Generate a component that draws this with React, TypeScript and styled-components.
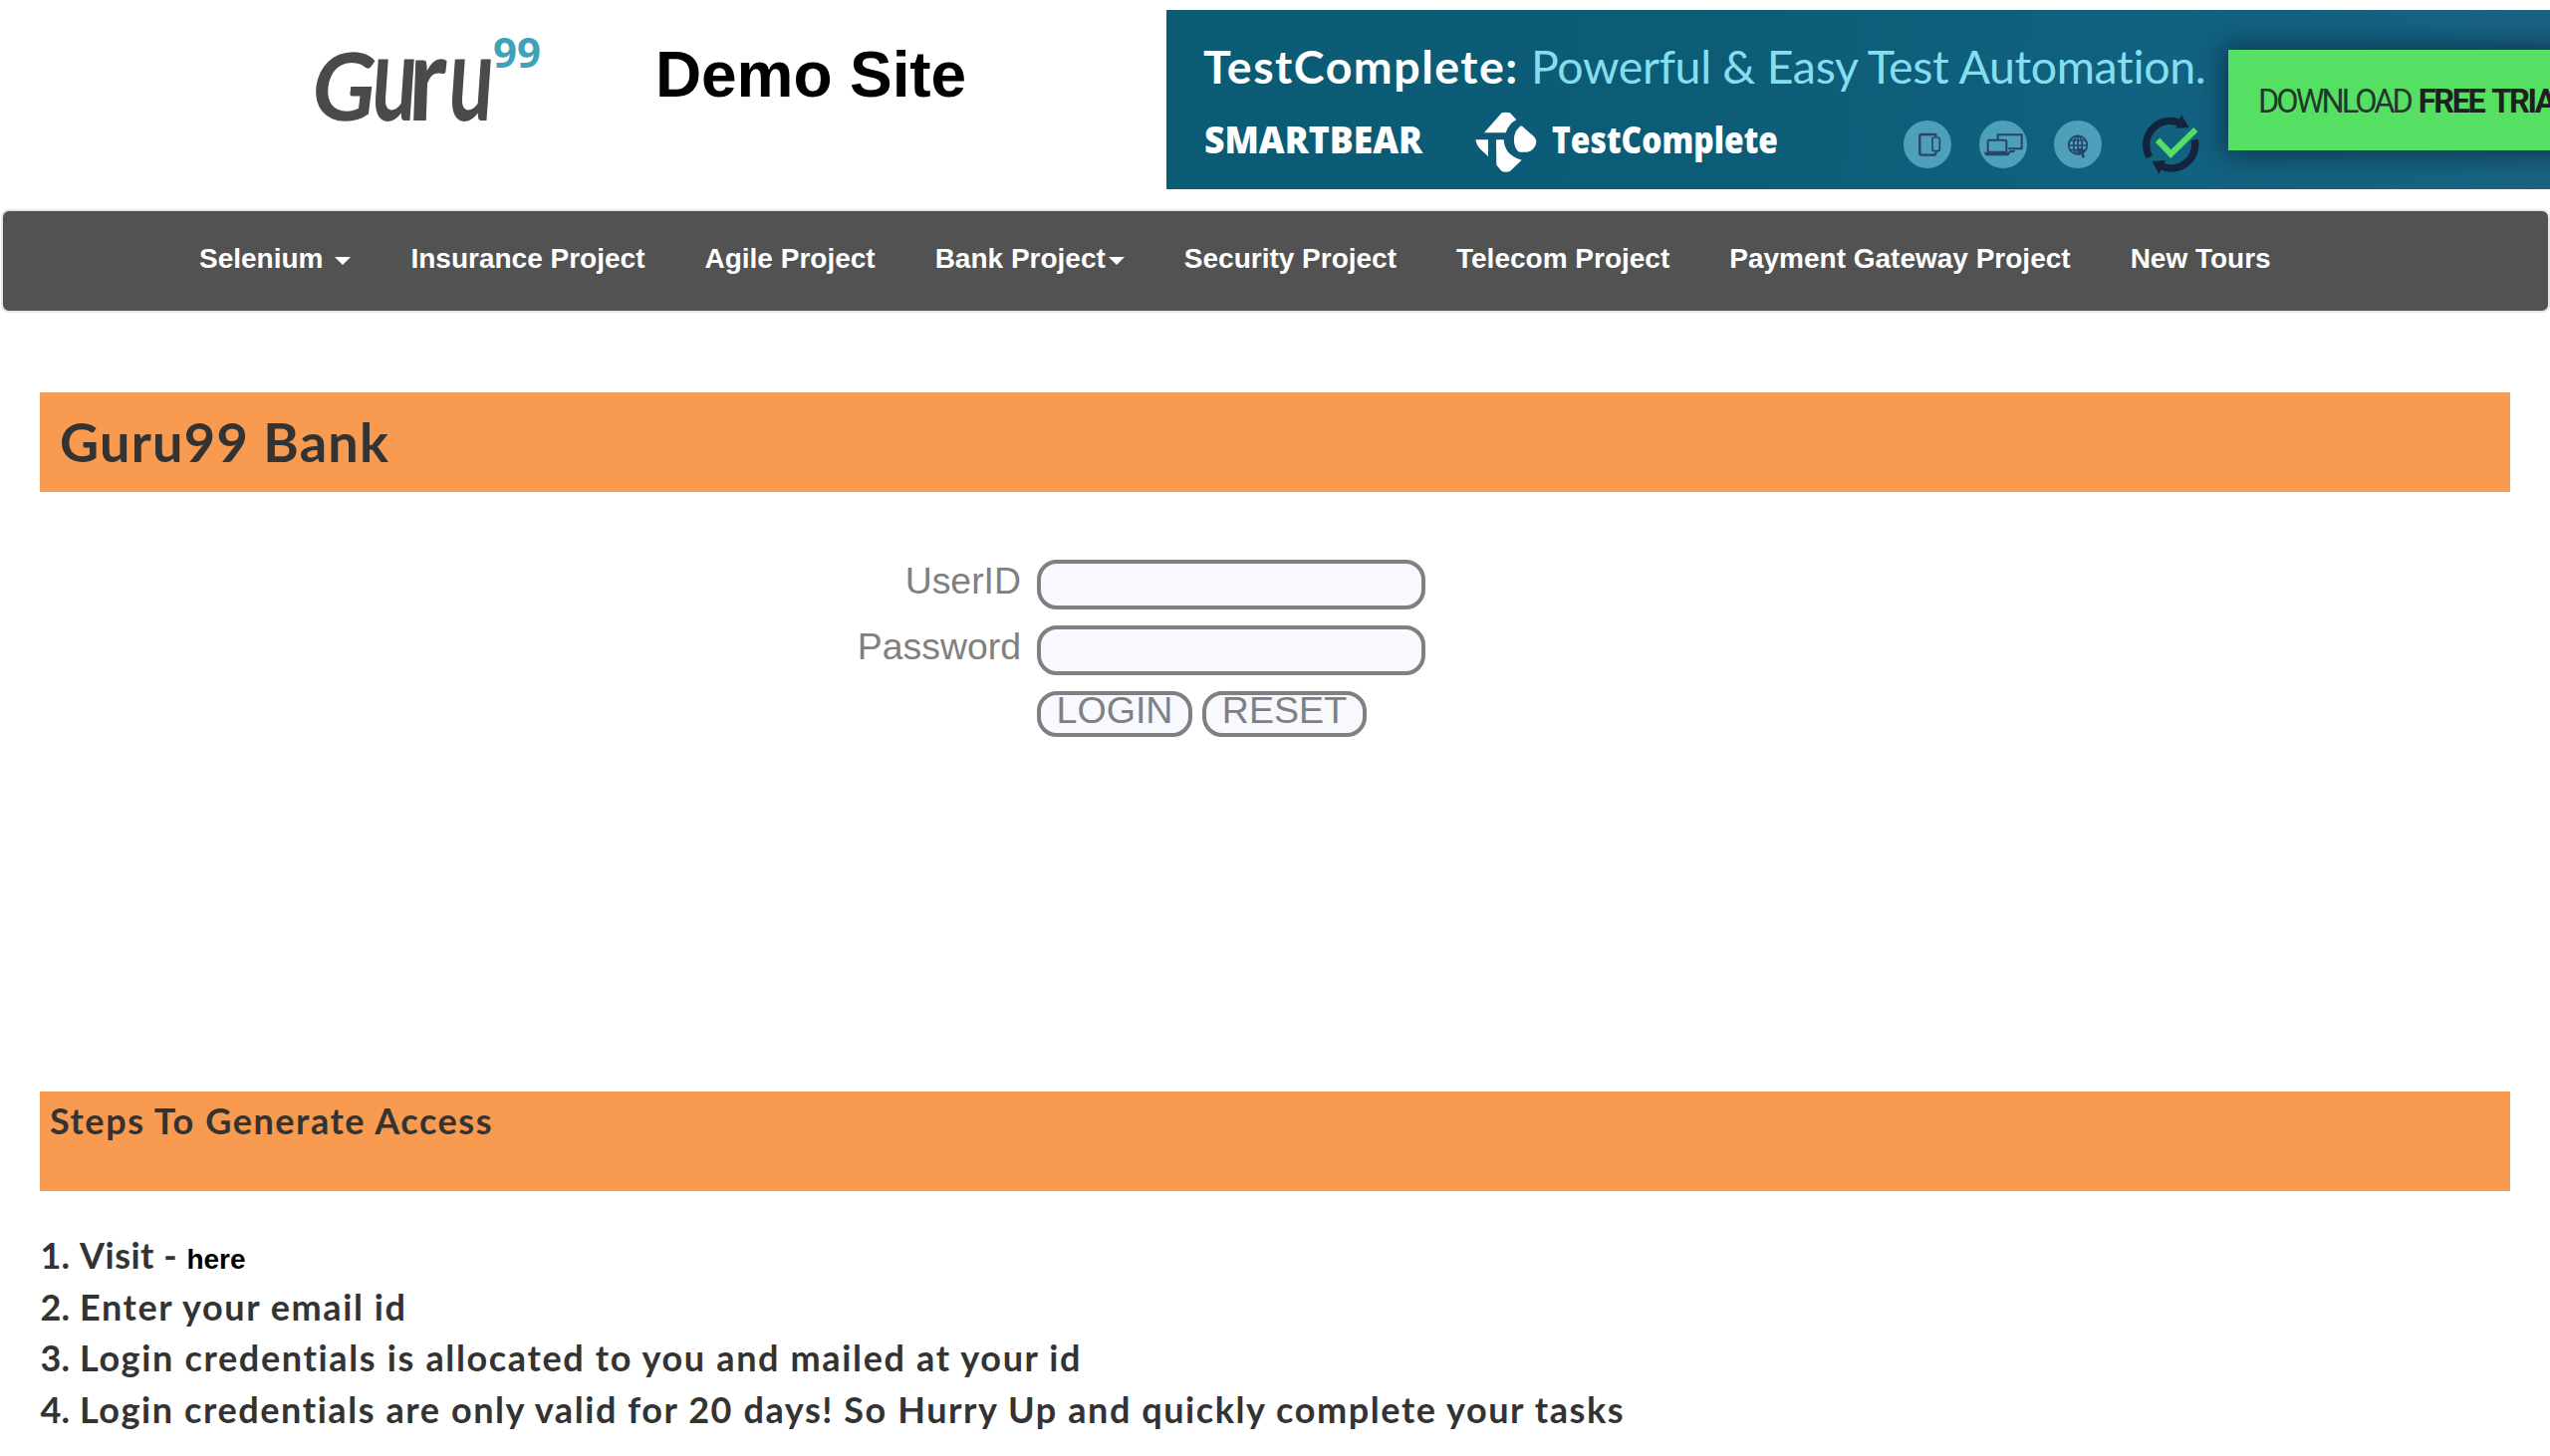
import React from "react";
import styled, { createGlobalStyle } from "styled-components";

const GlobalStyle = createGlobalStyle`
  * { box-sizing: border-box; }
  body { margin: 0; background: #fff; overflow: hidden; }
`;

const helvetica = `"Liberation Sans", Arial, sans-serif`;
const rounded = `Lato, "Open Sans", sans-serif`;

const Page = styled.div`
  width: 100%;
  height: 1462px;
  overflow: hidden;
  color: #333;
  font-family: ${rounded};
`;

const Header = styled.header`
  display: flex;
  align-items: flex-start;
  height: 210px;
  padding-left: 300px;
`;

const Logo = styled.svg`
  display: block;
  flex: none;
  overflow: visible;
  width: 260px;
  height: 110px;
  margin-top: 25px;
`;

const SiteTitle = styled.h1`
  margin: 35px 0 0 98px;
  width: 513px;
  flex: none;
  color: #000;
  font: 700 64px/80px ${helvetica};
  letter-spacing: -0.1px;
`;

const Banner = styled.a`
  display: flex;
  flex: 1;
  min-width: 0;
  height: 180px;
  margin-top: 10px;
  padding-left: 37px;
  overflow: hidden;
  background: linear-gradient(95deg, #0c5b75 0%, #0d5c77 40%, #10617f 68%, #1a6384 100%);
  text-decoration: none;
`;

const BannerBody = styled.div`
  flex: none;
  width: 1029px;
  padding-top: 26px;
`;

const Headline = styled.div`
  display: flex;
  white-space: nowrap;
  line-height: 60px;
  font-family: Lato, sans-serif;
  font-size: 46.5px;
`;

const HeadlineStrong = styled.strong`
  width: 329px;
  color: #fff;
  font-weight: 700;
  letter-spacing: 1.5px;
`;

const HeadlineText = styled.span`
  color: #85def0;
  letter-spacing: -0.35px;
`;

const BrandRow = styled.div`
  display: flex;
  align-items: center;
  height: 62px;
  margin-top: 16px;
`;

const Glyph = styled.svg<{ $w: number; $h: number; $gap?: number }>`
  display: block;
  flex: none;
  overflow: visible;
  width: ${(p) => p.$w}px;
  height: ${(p) => p.$h}px;
  margin-left: ${(p) => p.$gap ?? 0}px;
`;

const Badge = styled(Glyph)`
  margin-top: 3px;
`;

const Download = styled.span`
  flex: none;
  width: 360px;
  height: 101px;
  margin-top: 40px;
  padding-left: 30px;
  background: #55e063;
  box-shadow: 0 0 26px 4px rgba(10, 40, 60, 0.75);
  color: #23382a;
  font: 400 32.5px/104px Roboto, sans-serif;
  letter-spacing: -3px;
  white-space: nowrap;
`;

const DownloadStrong = styled.strong`
  margin-left: 3px;
  color: #1f1f1f;
  font-weight: 700;
  letter-spacing: -2.4px;
  word-spacing: 3px;
`;

const Nav = styled.nav`
  height: 104px;
  margin: 0 0 0 1px;
  padding: 28px 0 0 167px;
  display: flex;
  align-items: flex-start;
  border: 2px solid #e7e7e7;
  border-radius: 8px;
  background: #525252;
`;

const NavItem = styled.a`
  display: flex;
  align-items: center;
  padding: 0 30px;
  color: #fff;
  font: 700 28px/40px ${helvetica};
  white-space: nowrap;
`;

const Caret = styled.span<{ $gap: number }>`
  margin: 4px 0 0 ${(p) => p.$gap}px;
  border-top: 8px solid #fff;
  border-left: 8px solid transparent;
  border-right: 8px solid transparent;
`;

const Bar = styled.div<{ $top: number }>`
  height: 100px;
  margin: ${(p) => p.$top}px 40px 0;
  background: #f89a4f;
  overflow: hidden;
`;

const BankTitle = styled.h2`
  margin: 0;
  padding-left: 20px;
  font: 700 54px/100px ${rounded};
  letter-spacing: 1.25px;
`;

const StepsTitle = styled.h3`
  margin: 0;
  padding: 4px 0 0 10px;
  font: 700 36px/50px ${rounded};
  letter-spacing: 1.57px;
`;

const Form = styled.form`
  display: grid;
  grid-template-columns: 1025px auto;
  grid-template-rows: 50px 50px 46px;
  column-gap: 16px;
  row-gap: 16px;
  height: 534px;
  margin-top: 68px;
  color: #808080;
  font: 400 37.4px/43px ${helvetica};
`;

const Label = styled.label`
  text-align: right;
`;

const Field = styled.input`
  width: 390px;
  height: 50px;
  padding: 0 16px;
  border: 4px solid #808080;
  border-radius: 20px;
  background: #f8f8ff;
  color: #808080;
  font: inherit;
`;

const Actions = styled.div`
  grid-column: 2;
  display: flex;
  gap: 10px;
`;

const Button = styled.button<{ $w: number }>`
  display: flex;
  align-items: center;
  justify-content: center;
  width: ${(p) => p.$w}px;
  height: 46px;
  padding: 0 0 7px;
  border: 4px solid #808080;
  border-radius: 20px;
  background: #f8f8ff;
  color: #808080;
  font: 400 37.6px/31px ${helvetica};
`;

const Steps = styled.ol`
  margin: 39px 0 0;
  padding: 0;
  list-style: none;
  font-size: 36px;
  font-weight: 700;
`;

const Step = styled.li<{ $spacing: number }>`
  display: grid;
  grid-template-columns: 70px auto;
  justify-content: start;
  column-gap: 10px;
  height: 51.6px;
  line-height: 51.6px;
  letter-spacing: ${(p) => p.$spacing}px;
  white-space: nowrap;
`;

const StepNumber = styled.span`
  text-align: right;
  letter-spacing: 0;
`;

const StepLink = styled.a`
  color: #000;
  font: 700 28px/40px ${helvetica};
  letter-spacing: 0;
`;

const GuruLogo = () => (
  <Logo viewBox="0 0 260 110" aria-label="Guru99">
    <g fontFamily="Lato, sans-serif" fontWeight={700} fill="#4a4a4a">
      <text transform="translate(10 96) skewX(-7) scale(0.93 1)" fontSize="94">G</text>
      <text transform="translate(71 96) skewX(-4) scale(0.67 1)" fontSize="120">u</text>
      <text transform="translate(109 96) skewX(-2) scale(0.86 1)" fontSize="118">r</text>
      <text transform="translate(148 96) skewX(-4) scale(0.67 1)" fontSize="120">u</text>
    </g>
    <text x="195" y="43" fontFamily="Open Sans, sans-serif" fontWeight={700} fontSize="42" fill="#3fa2b8" textLength="48" lengthAdjust="spacingAndGlyphs">99</text>
  </Logo>
);

const SmartBear = () => (
  <Glyph $w={219} $h={62} $gap={1} viewBox="0 0 219 62">
    <text x="0" y="42" fontFamily="Open Sans, sans-serif" fontWeight={800} fontSize="37" fill="#fff" textLength="219" lengthAdjust="spacingAndGlyphs">SMARTBEAR</text>
  </Glyph>
);

const TestCompleteMark = () => (
  <Glyph $w={63.3} $h={61.7} $gap={52} viewBox="60 35 190 185">
    <g fill="#fff">
      <path d="M90 99 L143 39 Q155 35 168 39 L187 60 Q164 72 155 99Z" />
      <path d="M64 120H102V170L86 155Q68 142 64 120Z" />
      <path d="M126 120H149Q152 168 203 181L168 215Q155 219 143 215L127 196Z" />
      <path d="M203 78Q181 88 180 118Q179 142 193 156Q212 160 229 154Q248 142 247 124Q244 111 229 101Z" />
    </g>
  </Glyph>
);

const TestCompleteName = () => (
  <Glyph $w={227} $h={62} $gap={15} viewBox="0 0 227 62">
    <text x="0" y="41.5" fontFamily="Open Sans, sans-serif" fontWeight={800} fontSize="37" fill="#fff" textLength="227" lengthAdjust="spacingAndGlyphs">TestComplete</text>
  </Glyph>
);

const DeviceIcon = () => (
  <Badge $w={48} $h={48} $gap={126} viewBox="35 61 144 144">
    <circle cx="107" cy="133" r="72" fill="#4d9fba" />
    <g fill="none" stroke="#25456b" strokeWidth="7">
      <path d="M122 165H89Q84 165 84 160V108Q84 103 89 103H128Q133 103 133 109" />
      <rect x="122" y="112" width="22" height="41" rx="5" strokeWidth="5" />
      <path d="M120 165H129L134 156" />
    </g>
  </Badge>
);

const ScreensIcon = () => (
  <Badge $w={48} $h={48} $gap={28} viewBox="262 61 144 144">
    <circle cx="334" cy="133" r="72" fill="#4d9fba" />
    <g fill="none" stroke="#25456b" strokeWidth="6">
      <path d="M318 118V104H390V146H350" />
      <rect x="288" y="120" width="56" height="36" rx="3" />
    </g>
    <path d="M277 156H350L354 151H371L366 158H356L350 167H284Q278 165 277 156Z" fill="#25456b" />
  </Badge>
);

const GlobeIcon = () => (
  <Badge $w={48} $h={48} $gap={27} viewBox="488 61 144 144">
    <circle cx="560" cy="133" r="72" fill="#4d9fba" />
    <g fill="none" stroke="#25456b" strokeWidth="5">
      <circle cx="560" cy="135" r="28" />
      <ellipse cx="560" cy="135" rx="13" ry="28" />
      <path d="M560 107V163M536 121H584M532 136H588M536 150H584" />
    </g>
    <path d="M562 142L585 154L577 158L581 171L574 174L569 161L563 165Z" fill="#25456b" />
  </Badge>
);

const CycleCheck = () => (
  <Badge $w={58.3} $h={61.7} $gap={40} viewBox="750 40 175 185">
    <g fill="none" stroke="#13243f" strokeWidth="22">
      <path d="M774 171A72 72 0 0 1 872 72" />
      <path d="M910 119A72 72 0 0 1 806 197" />
    </g>
    <path d="M870 43L893 82L854 84Z" fill="#13243f" />
    <path d="M782 184L822 181L802 223Z" fill="#13243f" />
    <path d="M798 120L838 162L913 88" fill="none" stroke="#55e063" strokeWidth="18" />
  </Badge>
);

const navItems: { label: string; caret?: number }[] = [
  { label: "Selenium", caret: 12 },
  { label: "Insurance Project" },
  { label: "Agile Project" },
  { label: "Bank Project", caret: 3 },
  { label: "Security Project" },
  { label: "Telecom Project" },
  { label: "Payment Gateway Project" },
  { label: "New Tours" },
];

const steps: { text: React.ReactNode; spacing: number }[] = [
  { text: <>Visit - <StepLink>here</StepLink></>, spacing: 0.5 },
  { text: "Enter your email id", spacing: 1.6 },
  { text: "Login credentials is allocated to you and mailed at your id", spacing: 1.65 },
  { text: "Login credentials are only valid for 20 days! So Hurry Up and quickly complete your tasks", spacing: 1.58 },
];

export default function App() {
  return (
    <Page>
      <GlobalStyle />
      <Header>
        <GuruLogo />
        <SiteTitle>Demo Site</SiteTitle>
        <Banner>
          <BannerBody>
            <Headline>
              <HeadlineStrong>TestComplete:</HeadlineStrong>
              <HeadlineText>Powerful &amp; Easy Test Automation.</HeadlineText>
            </Headline>
            <BrandRow>
              <SmartBear />
              <TestCompleteMark />
              <TestCompleteName />
              <DeviceIcon />
              <ScreensIcon />
              <GlobeIcon />
              <CycleCheck />
            </BrandRow>
          </BannerBody>
          <Download>
            DOWNLOAD <DownloadStrong>FREE TRIAL</DownloadStrong>
          </Download>
        </Banner>
      </Header>
      <Nav>
        {navItems.map((item) => (
          <NavItem key={item.label}>
            {item.label}
            {item.caret !== undefined && <Caret $gap={item.caret} />}
          </NavItem>
        ))}
      </Nav>
      <Bar $top={80}>
        <BankTitle>Guru99 Bank</BankTitle>
      </Bar>
      <Form onSubmit={(e) => e.preventDefault()}>
        <Label htmlFor="uid">UserID</Label>
        <Field id="uid" type="text" />
        <Label htmlFor="password">Password</Label>
        <Field id="password" type="password" />
        <Actions>
          <Button type="submit" $w={156}>LOGIN</Button>
          <Button type="reset" $w={165}>RESET</Button>
        </Actions>
      </Form>
      <Bar $top={0}>
        <StepsTitle>Steps To Generate Access</StepsTitle>
      </Bar>
      <Steps>
        {steps.map((step, i) => (
          <Step key={i} $spacing={step.spacing}>
            <StepNumber>{i + 1}.</StepNumber>
            <span>{step.text}</span>
          </Step>
        ))}
      </Steps>
    </Page>
  );
}
